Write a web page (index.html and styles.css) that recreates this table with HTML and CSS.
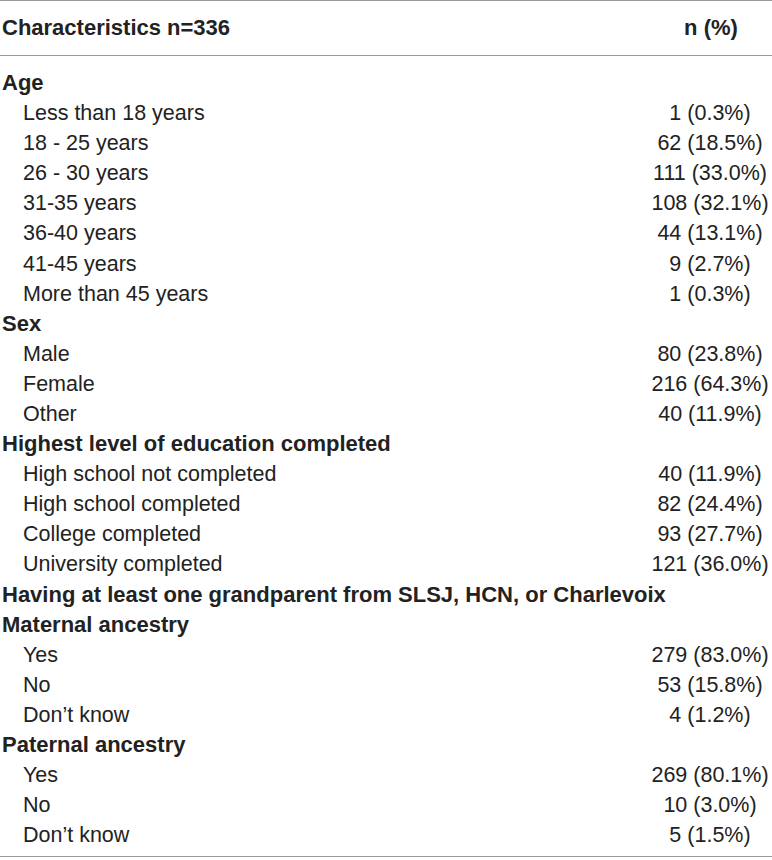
FILE: index.html
```html
<!DOCTYPE html>
<html>
<head>
    <title>Characteristics</title>
    <link rel="stylesheet" href="styles.css">
</head>
<body>

    <!-- Tabla de características -->
    <table class="stats">
        <thead>
            <tr><th class="label">Characteristics n=336</th><th class="value">n (%)</th></tr>
        </thead>
        <tbody>
            <tr class="group first"><td colspan="2">Age</td></tr>
            <tr><td class="label">Less than 18 years</td><td class="value">1 (0.3%)</td></tr>
            <tr><td class="label">18 - 25 years</td><td class="value">62 (18.5%)</td></tr>
            <tr><td class="label">26 - 30 years</td><td class="value">111 (33.0%)</td></tr>
            <tr><td class="label">31-35 years</td><td class="value">108 (32.1%)</td></tr>
            <tr><td class="label">36-40 years</td><td class="value">44 (13.1%)</td></tr>
            <tr><td class="label">41-45 years</td><td class="value">9 (2.7%)</td></tr>
            <tr><td class="label">More than 45 years</td><td class="value">1 (0.3%)</td></tr>

            <tr class="group"><td colspan="2">Sex</td></tr>
            <tr><td class="label">Male</td><td class="value">80 (23.8%)</td></tr>
            <tr><td class="label">Female</td><td class="value">216 (64.3%)</td></tr>
            <tr><td class="label">Other</td><td class="value">40 (11.9%)</td></tr>

            <tr class="group"><td colspan="2">Highest level of education completed</td></tr>
            <tr><td class="label">High school not completed</td><td class="value">40 (11.9%)</td></tr>
            <tr><td class="label">High school completed</td><td class="value">82 (24.4%)</td></tr>
            <tr><td class="label">College completed</td><td class="value">93 (27.7%)</td></tr>
            <tr><td class="label">University completed</td><td class="value">121 (36.0%)</td></tr>

            <tr class="group"><td colspan="2">Having at least one grandparent from SLSJ, HCN, or Charlevoix</td></tr>
            <tr class="group"><td colspan="2">Maternal ancestry</td></tr>
            <tr><td class="label">Yes</td><td class="value">279 (83.0%)</td></tr>
            <tr><td class="label">No</td><td class="value">53 (15.8%)</td></tr>
            <tr><td class="label">Don’t know</td><td class="value">4 (1.2%)</td></tr>

            <tr class="group"><td colspan="2">Paternal ancestry</td></tr>
            <tr><td class="label">Yes</td><td class="value">269 (80.1%)</td></tr>
            <tr><td class="label">No</td><td class="value">10 (3.0%)</td></tr>
            <tr class="last"><td class="label">Don’t know</td><td class="value">5 (1.5%)</td></tr>
        </tbody>
    </table>

</body>
</html>
```

FILE: styles.css
```css
/* Página */
body {
    margin: 0;
    background-color: #fff;
    font-family: "Liberation Sans", Arial, sans-serif;
    color: #222;
}

/* Tabla */
.stats {
    width: 772px;
    border-collapse: collapse;
    border-top: 1px solid #9a9a9a;
    border-bottom: 1px solid #9a9a9a;
    font-size: 21.5px;
}

.stats th {
    height: 54px;
    padding: 0 0 0 2px;
    font-size: 22px;
    font-weight: bold;
    border-bottom: 1px solid #9a9a9a;
    vertical-align: middle;
}

.stats td {
    height: 30.1px;
    padding: 0;
    line-height: 24px;
}

.stats .label {
    text-align: left;
    padding-left: 23px;
}

.stats th.label {
    padding-left: 2px;
}

.stats .value {
    width: 122px;
    text-align: center;
}

/* Filas de grupo */
.group td {
    font-size: 22px;
    font-weight: bold;
    padding-left: 2px;
}

/* Espacio tras la cabecera y antes de la línea final */
.stats tr.first td {
    height: 30px;
    padding-top: 12px;
}

.stats tr.last td {
    height: 30px;
    padding-bottom: 6px;
}
```
